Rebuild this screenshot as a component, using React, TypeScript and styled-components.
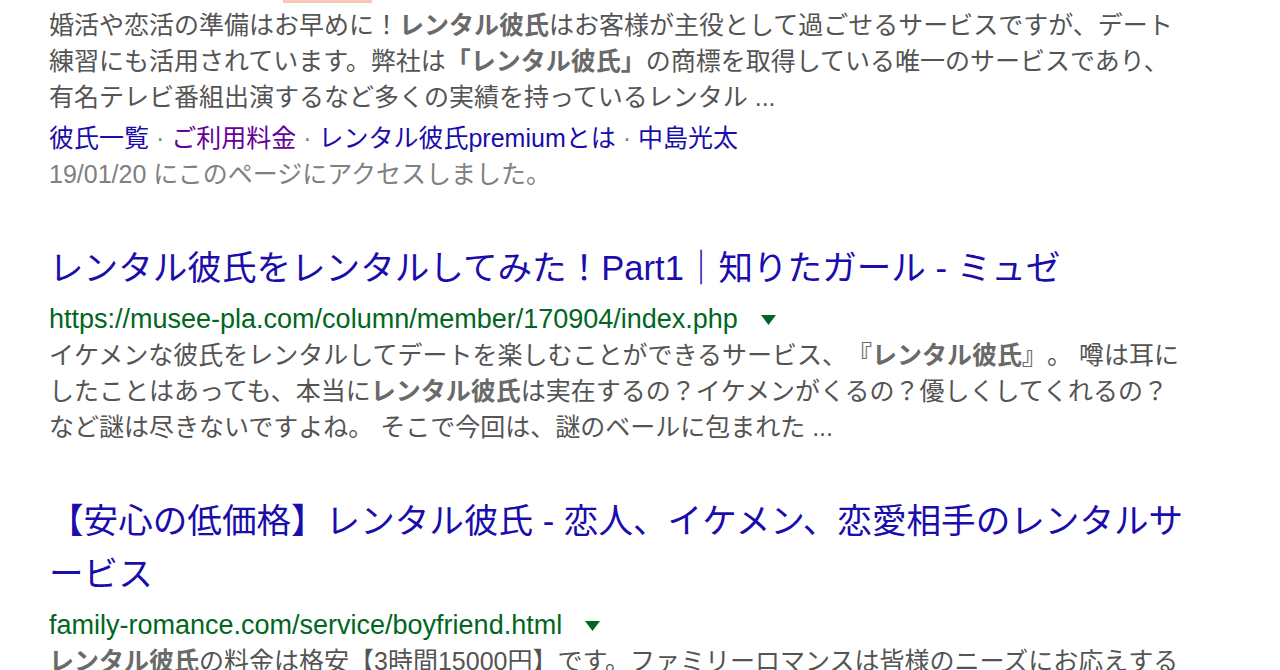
import React from 'react'
import styled, { createGlobalStyle } from 'styled-components'

const GlobalStyle = createGlobalStyle`
  html, body {
    margin: 0;
    padding: 0;
    background: #ffffff;
    overflow: hidden;
  }
  body {
    font-family: "Liberation Sans", Arial, "Noto Sans CJK JP", sans-serif;
    text-spacing-trim: space-all;
  }
`

const Page = styled.div`
  width: 1160px;
  padding-left: 49px;
`

const TopMark = styled.div`
  width: 89px;
  height: 3px;
  margin-left: 234px;
  background: #f7c7b8;
`

const Result = styled.div<{ $first?: boolean }>`
  margin-top: ${(p) => (p.$first ? '0' : '50px')};
`

const Title = styled.a`
  display: block;
  font-size: 34.6px;
  line-height: 53px;
  color: #1a0dab;
  text-decoration: none;
  white-space: nowrap;
`

const UrlRow = styled.div`
  display: flex;
  align-items: center;
  margin-top: 6px;
  font-size: 27px;
  line-height: 36px;
  color: #006621;
  white-space: nowrap;
`

const Caret = styled.svg`
  width: 15px;
  height: 10px;
  margin-left: 23px;
  margin-top: 2px;
`

const Snippet = styled.div<{ $top?: number }>`
  margin-top: ${(p) => p.$top || 0}px;
  font-size: 25px;
  line-height: 36px;
  color: #545454;
  white-space: nowrap;
`

const Em = styled.b`
  color: #6a6a6a;
  font-weight: bold;
`

const SiteLinks = styled.div`
  margin-top: 5px;
  font-size: 25px;
  line-height: 36px;
  color: #545454;
  white-space: nowrap;
`

const SiteLink = styled.a<{ $visited?: boolean }>`
  color: ${(p) => (p.$visited ? '#660099' : '#1a0dab')};
  text-decoration: none;
`

const Dot = styled.span`
  color: #808080;
`

const Meta = styled.div`
  font-size: 25px;
  line-height: 36px;
  color: #808080;
  white-space: nowrap;
`

const DropCaret = () => (
  <Caret viewBox="0 0 15 10">
    <path d="M0 0 H15 L7.5 10 Z" fill="#006621" />
  </Caret>
)

const App: React.FC = () => {
  return (
    <Page>
      <GlobalStyle />
      <TopMark />

      <Result $first>
        <Snippet $top={4}>
          婚活や恋活の準備はお早めに！<Em>レンタル彼氏</Em>はお客様が主役として過ごせるサービスですが、デート
          <br />
          練習にも活用されています。弊社は<Em>「レンタル彼氏」</Em>の商標を取得している唯一のサービスであり、
          <br />
          有名テレビ番組出演するなど多くの実績を持っているレンタル ...
        </Snippet>
        <SiteLinks>
          <SiteLink href="#">彼氏一覧</SiteLink>
          <Dot> · </Dot>
          <SiteLink href="#" $visited>
            ご利用料金
          </SiteLink>
          <Dot> · </Dot>
          <SiteLink href="#">レンタル彼氏premiumとは</SiteLink>
          <Dot> · </Dot>
          <SiteLink href="#">中島光太</SiteLink>
        </SiteLinks>
        <Meta>19/01/20 にこのページにアクセスしました。</Meta>
      </Result>

      <Result>
        <Title href="#">レンタル彼氏をレンタルしてみた！Part1｜知りたガール - ミュゼ</Title>
        <UrlRow>
          https://musee-pla.com/column/member/170904/index.php
          <DropCaret />
        </UrlRow>
        <Snippet>
          イケメンな彼氏をレンタルしてデートを楽しむことができるサービス、<Em>『レンタル彼氏』</Em>。 噂は耳に
          <br />
          したことはあっても、本当に<Em>レンタル彼氏</Em>は実在するの？イケメンがくるの？優しくしてくれるの？
          <br />
          など謎は尽きないですよね。 そこで今回は、謎のベールに包まれた ...
        </Snippet>
      </Result>

      <Result>
        <Title href="#">
          【安心の低価格】レンタル彼氏 - 恋人、イケメン、恋愛相手のレンタルサ
          <br />
          ービス
        </Title>
        <UrlRow>
          family-romance.com/service/boyfriend.html
          <DropCaret />
        </UrlRow>
        <Snippet>
          <Em>レンタル彼氏</Em>の料金は格安【3時間15000円】です。ファミリーロマンスは皆様のニーズにお応えする
        </Snippet>
      </Result>
    </Page>
  )
}

export default App
